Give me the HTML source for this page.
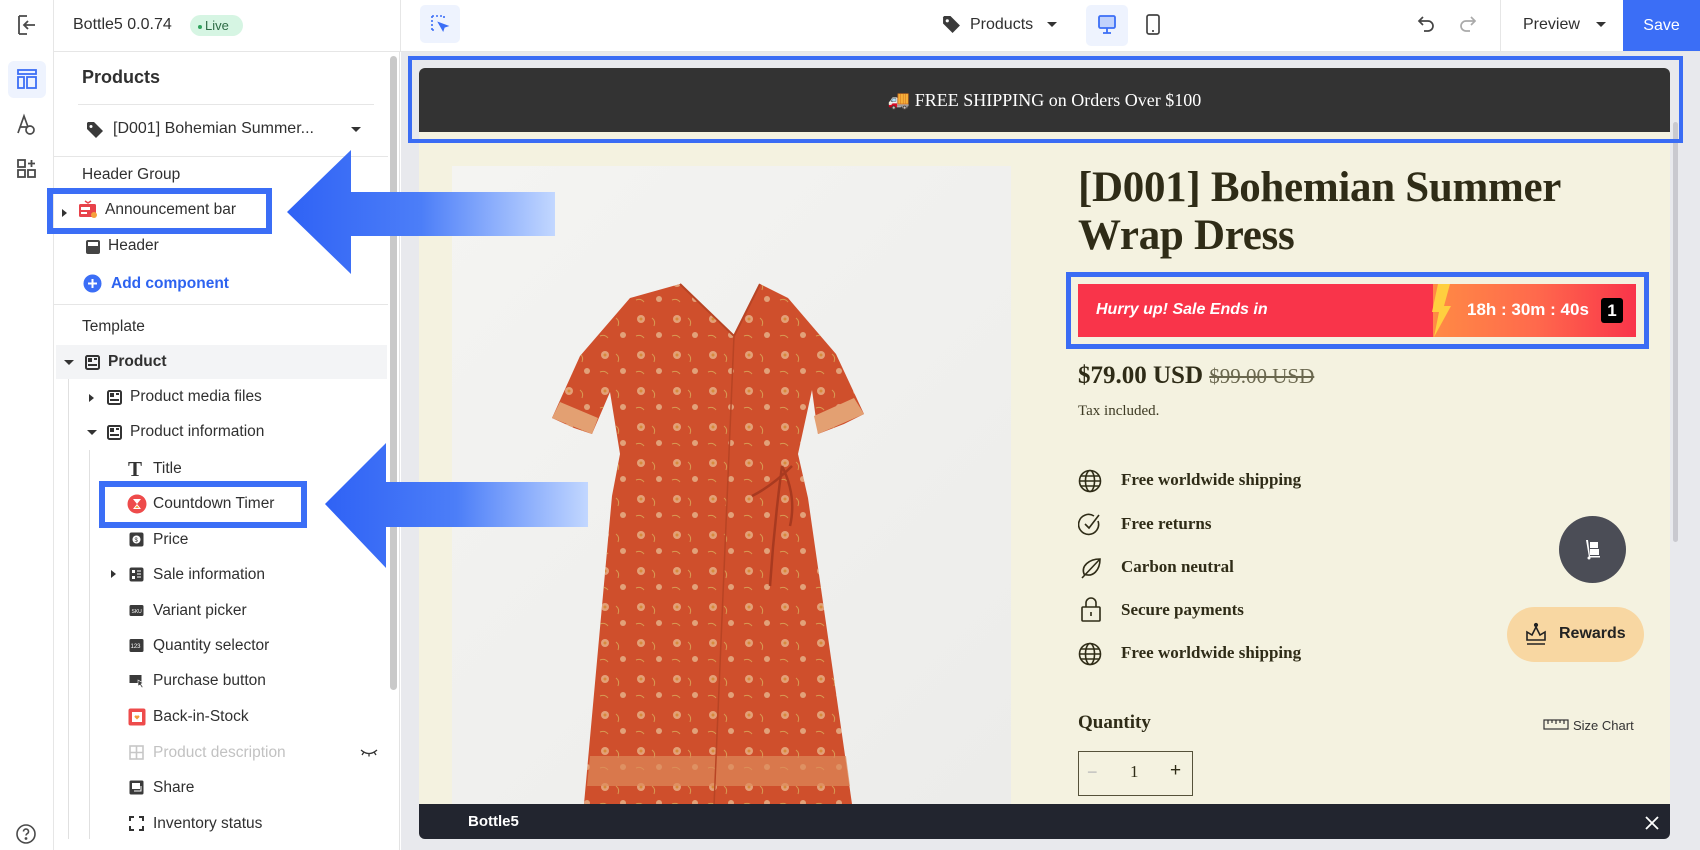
<!DOCTYPE html>
<html><head><meta charset="utf-8"><style>
*{margin:0;padding:0;box-sizing:border-box}
body{width:1700px;height:850px;overflow:hidden;background:#fff;font-family:"Liberation Sans",sans-serif;color:#303030;position:relative}
.a{position:absolute}
.sans{font-family:"Liberation Sans",sans-serif}
.serif{font-family:"Liberation Serif",serif}
.it{position:absolute;font-size:15.5px;color:#303030;white-space:nowrap;line-height:20px}
.ic{position:absolute;width:15px;height:15px}
.feat{position:absolute;left:1121px;font-family:"Liberation Serif",serif;font-weight:bold;font-size:17px;color:#2f2c17}
</style></head><body>

<!-- left rail -->
<div class="a" style="left:0;top:0;width:54px;height:850px;border-right:1px solid #e6e6e6;background:#fff"></div>
<svg class="a" style="left:16px;top:14px" width="22" height="22" viewBox="0 0 22 22" fill="none" stroke="#4a4a4a" stroke-width="1.8"><path d="M3 2v18M3 2h8M3 20h8M19 11H8M12 7l-4 4 4 4"/></svg>
<div class="a" style="left:8px;top:61px;width:38px;height:37px;background:#eef3fe;border-radius:6px"></div>
<svg class="a" style="left:16px;top:68px" width="22" height="22" viewBox="0 0 22 22" fill="none" stroke="#3d6ef5" stroke-width="1.8"><rect x="2" y="2" width="18" height="4"/><rect x="2" y="9" width="6" height="11"/><rect x="11" y="9" width="9" height="11"/></svg>
<svg class="a" style="left:15px;top:113px" width="24" height="24" viewBox="0 0 24 24" fill="none" stroke="#4a4a4a" stroke-width="1.7"><path d="M3 20L9 3l4 11M5 14h7"/><circle cx="15" cy="17" r="4"/></svg>
<svg class="a" style="left:16px;top:158px" width="22" height="22" viewBox="0 0 22 22" fill="none" stroke="#4a4a4a" stroke-width="1.8"><rect x="2" y="2" width="7" height="7"/><rect x="2" y="12" width="7" height="7"/><rect x="12" y="12" width="7" height="7"/><path d="M15.5 2v7M12 5.5h7"/></svg>
<svg class="a" style="left:15px;top:823px" width="22" height="22" viewBox="0 0 22 22" fill="none" stroke="#4a4a4a" stroke-width="1.6"><circle cx="11" cy="11" r="9"/><path d="M8.5 8.5a2.5 2.5 0 1 1 3.5 2.3c-.7.4-1 .9-1 1.7"/><circle cx="11" cy="15.5" r=".6" fill="#4a4a4a"/></svg>

<!-- top header left -->
<div class="a" style="left:54px;top:51px;width:347px;height:1px;background:#e6e6e6"></div>
<div class="a" style="left:73px;top:16px;font-size:16px;color:#303030">Bottle5 0.0.74</div>
<div class="a" style="left:190px;top:15px;width:53px;height:21px;border-radius:11px;background:#d6f5e3;font-size:13px;color:#2d6b45;padding-left:8px;line-height:21px"><span style="display:inline-block;width:4px;height:4px;border-radius:2px;background:#2fa35d;vertical-align:middle;margin-right:3px"></span>Live</div>
<div class="a" style="left:400px;top:0;width:1px;height:52px;background:#e6e6e6"></div>

<!-- sidebar panel -->
<div class="a" style="left:54px;top:52px;width:346px;height:798px;background:#fff;border-right:1px solid #e3e3e3"></div>
<div class="a" style="left:390px;top:56px;width:7px;height:634px;border-radius:4px;background:#c9c9c9"></div>
<div class="a" style="left:82px;top:67px;font-size:18px;font-weight:bold;color:#303030">Products</div>
<div class="a" style="left:78px;top:104px;width:296px;height:1px;background:#e6e6e6"></div>
<svg class="a" style="left:86px;top:121px" width="18" height="18" viewBox="0 0 18 18"><path d="M1 2v6l9 9 7-7-9-9H2z" fill="#3a3a3a"/><circle cx="5" cy="5.5" r="1.5" fill="#fff"/></svg>
<div class="it" style="left:113px;top:119px;font-size:16px">[D001] Bohemian Summer...</div>
<div class="a" style="left:351px;top:127px;border:5px solid transparent;border-top:5px solid #333;border-bottom:none"></div>
<div class="a" style="left:54px;top:156px;width:334px;height:1px;background:#e6e6e6"></div>
<div class="it" style="left:82px;top:165px;font-size:15.5px">Header Group</div>
<div class="a" style="left:62px;top:209px;border:4px solid transparent;border-left:5px solid #333;border-right:none"></div>
<svg class="a" style="left:78px;top:199px" width="20" height="20" viewBox="0 0 20 20"><path d="M7 2l3 2 3-2" stroke="#e8424a" fill="none" stroke-width="1.5"/><rect x="1" y="5" width="17" height="13" rx="1.5" fill="#e8424a"/><rect x="3" y="8" width="9" height="3" fill="#fff"/><rect x="3" y="13" width="6" height="2" fill="#fff"/><circle cx="16" cy="16" r="3" fill="#f6a03c"/></svg>
<div class="it" style="left:105px;top:200px;font-size:15.5px">Announcement bar</div>
<div class="a" style="left:47px;top:188px;width:225px;height:46px;border:6px solid #3b6ef6"></div>
<svg class="a" style="left:85px;top:239px" width="16" height="16" viewBox="0 0 16 16"><rect x="1" y="1" width="14" height="14" rx="2" fill="#444"/><rect x="3" y="3" width="10" height="4" fill="#fff"/></svg>
<div class="it" style="left:108px;top:236px">Header</div>
<svg class="a" style="left:83px;top:274px" width="19" height="19" viewBox="0 0 19 19"><circle cx="9.5" cy="9.5" r="9" fill="#3b6ef6"/><path d="M9.5 5v9M5 9.5h9" stroke="#fff" stroke-width="2"/></svg>
<div class="it" style="left:111px;top:274px;color:#2d63f0;font-weight:bold">Add component</div>
<div class="a" style="left:54px;top:304px;width:334px;height:1px;background:#e6e6e6"></div>
<div class="it" style="left:82px;top:317px">Template</div>
<div class="a" style="left:56px;top:345px;width:331px;height:34px;background:#f3f4f6"></div>
<div class="a" style="left:64px;top:360px;border:5px solid transparent;border-top:5px solid #333;border-bottom:none"></div>
<svg class="ic" style="left:85px;top:355px"><rect x="1" y="1" width="13" height="13" rx="1.5" fill="none" stroke="#333" stroke-width="2"/><rect x="3" y="3" width="4" height="4" fill="#333"/><path d="M9 4h3M3 10h9" stroke="#333" stroke-width="2"/></svg>
<div class="it" style="left:108px;top:352px;font-weight:bold">Product</div>
<div class="a" style="left:68px;top:379px;width:1px;height:460px;background:#e0e0e0"></div>
<div class="a" style="left:89px;top:450px;width:1px;height:389px;background:#e0e0e0"></div>
<div class="a" style="left:89px;top:394px;border:4px solid transparent;border-left:5px solid #333;border-right:none"></div>
<svg class="ic" style="left:107px;top:390px"><rect x="1" y="1" width="13" height="13" rx="1.5" fill="none" stroke="#333" stroke-width="2"/><rect x="3" y="3" width="4" height="4" fill="#333"/><path d="M9 4h3M3 10h9" stroke="#333" stroke-width="2"/></svg>
<div class="it" style="left:130px;top:387px">Product media files</div>
<div class="a" style="left:87px;top:430px;border:5px solid transparent;border-top:5px solid #333;border-bottom:none"></div>
<svg class="ic" style="left:107px;top:425px"><rect x="1" y="1" width="13" height="13" rx="1.5" fill="none" stroke="#333" stroke-width="2"/><rect x="3" y="3" width="4" height="4" fill="#333"/><path d="M9 4h3M3 10h9" stroke="#333" stroke-width="2"/></svg>
<div class="it" style="left:130px;top:422px">Product information</div>

<div class="a serif" style="left:128px;top:457px;font-size:21px;font-weight:bold;color:#333">T</div>
<div class="it" style="left:153px;top:459px">Title</div>
<svg class="a" style="left:127px;top:494px" width="20" height="20" viewBox="0 0 20 20"><circle cx="10" cy="10" r="9.5" fill="#ee4b4b"/><path d="M6 5h8l-4 5 4 5H6l4-5z" fill="#fff"/><path d="M8 14h4l-2-2.5z" fill="#f6a03c"/></svg>
<div class="it" style="left:153px;top:494px">Countdown Timer</div>
<div class="a" style="left:99px;top:481px;width:208px;height:47px;border:6px solid #3b6ef6"></div>
<svg class="ic" style="left:129px;top:532px"><rect x="0.5" y="0.5" width="14" height="14" rx="2" fill="#3a3a3a"/><circle cx="7.5" cy="7.5" r="4" fill="#fff"/><text x="5.5" y="10" font-size="6" fill="#333" font-family="Liberation Sans">$</text></svg>
<div class="it" style="left:153px;top:530px">Price</div>
<div class="a" style="left:111px;top:570px;border:4px solid transparent;border-left:5px solid #333;border-right:none"></div>
<svg class="ic" style="left:129px;top:567px"><rect x="0.5" y="0.5" width="14" height="14" rx="2" fill="#3a3a3a"/><rect x="3" y="3" width="3" height="3" fill="#fff"/><rect x="3" y="9" width="3" height="3" fill="#fff"/><path d="M8 4h4M8 7h4M8 10h4" stroke="#fff"/></svg>
<div class="it" style="left:153px;top:565px">Sale information</div>
<svg class="ic" style="left:129px;top:603px"><rect x="0.5" y="2" width="14" height="11" rx="1.5" fill="#3a3a3a"/><text x="2.5" y="10" font-size="5" fill="#fff" font-family="Liberation Sans">SKU</text></svg>
<div class="it" style="left:153px;top:601px">Variant picker</div>
<svg class="ic" style="left:129px;top:638px"><rect x="0.5" y="1" width="14" height="13" rx="1.5" fill="#3a3a3a"/><text x="1.5" y="10" font-size="6" fill="#fff" font-family="Liberation Sans">123</text></svg>
<div class="it" style="left:153px;top:636px">Quantity selector</div>
<svg class="ic" style="left:129px;top:673px"><rect x="0.5" y="2" width="12" height="8" fill="#3a3a3a"/><path d="M9 7l5 3-2 1 2 3-1 1-2-3-2 1z" fill="#3a3a3a" stroke="#fff" stroke-width=".6"/></svg>
<div class="it" style="left:153px;top:671px">Purchase button</div>
<svg class="a" style="left:128px;top:708px" width="18" height="18" viewBox="0 0 18 18"><rect x="0.5" y="0.5" width="17" height="17" rx="2" fill="#ee4b4b"/><rect x="4" y="4" width="10" height="10" fill="#fff"/><path d="M9 11.5l-2.5-2.5a1.4 1.4 0 0 1 2.5-1 1.4 1.4 0 0 1 2.5 1z" fill="#f39b3a"/></svg>
<div class="it" style="left:153px;top:707px">Back-in-Stock</div>
<svg class="ic" style="left:129px;top:745px"><rect x="1" y="1" width="13" height="13" fill="none" stroke="#c7c7c7" stroke-width="1.6"/><path d="M7.5 1v13M1 7.5h13" stroke="#c7c7c7" stroke-width="1.6"/></svg>
<div class="it" style="left:153px;top:743px;color:#c2c2c2">Product description</div>
<svg class="a" style="left:360px;top:748px" width="18" height="10" viewBox="0 0 18 10" fill="none" stroke="#333" stroke-width="1.3"><path d="M1 2q8 7 16 0M4 4l-2 3M9 5.5v3M14 4l2 3"/></svg>
<svg class="ic" style="left:129px;top:780px"><rect x="0.5" y="0.5" width="14" height="14" rx="1.5" fill="#3a3a3a"/><rect x="3" y="3" width="8" height="6" fill="#fff"/><path d="M5 11h7V6" stroke="#fff" fill="none"/></svg>
<div class="it" style="left:153px;top:778px">Share</div>
<svg class="ic" style="left:129px;top:816px" fill="none" stroke="#333" stroke-width="2"><path d="M1 5V1h4M10 1h4v4M14 10v4h-4M5 14H1v-4"/></svg>
<div class="it" style="left:153px;top:814px">Inventory status</div>

<!-- canvas top bar -->
<div class="a" style="left:401px;top:0;width:1299px;height:52px;background:#fff;border-bottom:1px solid #e6e6e6"></div>
<div class="a" style="left:420px;top:5px;width:40px;height:38px;border-radius:5px;background:#eef3fe"></div>
<svg class="a" style="left:430px;top:14px" width="20" height="20" viewBox="0 0 20 20" fill="none" stroke="#3b6ef6" stroke-width="1.6"><path d="M2 2h12M2 2v14M2 16h4M14 2v4" stroke-dasharray="2 2"/><path d="M9 9l8 3-3 1-1 3z" fill="#3b6ef6"/></svg>
<svg class="a" style="left:942px;top:15px" width="19" height="19" viewBox="0 0 18 18"><path d="M1 2v6l9 9 7-7-9-9H2z" fill="#3a3a3a"/><circle cx="5" cy="5.5" r="1.5" fill="#fff"/></svg>
<div class="a" style="left:970px;top:16px;font-size:16px;color:#303030">Products</div>
<div class="a" style="left:1047px;top:22px;border:5px solid transparent;border-top:5px solid #333;border-bottom:none"></div>
<div class="a" style="left:1086px;top:5px;width:42px;height:41px;border-radius:5px;background:#eef3fe"></div>
<svg class="a" style="left:1096px;top:14px" width="22" height="22" viewBox="0 0 22 22" fill="none" stroke="#3b6ef6" stroke-width="1.8"><rect x="3" y="2" width="16" height="12" rx="1.5" fill="#3b6ef6" fill-opacity=".25"/><path d="M11 14v5M7 19h8"/></svg>
<svg class="a" style="left:1144px;top:13px" width="18" height="24" viewBox="0 0 18 24" fill="none" stroke="#444" stroke-width="1.7"><rect x="3" y="2" width="12" height="19" rx="2"/><path d="M8 18h2"/></svg>
<svg class="a" style="left:1417px;top:14px" width="20" height="22" viewBox="0 0 20 22" fill="none" stroke="#444" stroke-width="1.7"><path d="M6 3L2 7l4 4M2 7h9a5 5 0 0 1 0 10H7"/></svg>
<svg class="a" style="left:1457px;top:14px" width="20" height="22" viewBox="0 0 20 22" fill="none" stroke="#aaa" stroke-width="1.7"><path d="M14 3l4 4-4 4M18 7H9a5 5 0 0 0 0 10h4"/></svg>
<div class="a" style="left:1500px;top:0;width:1px;height:52px;background:#e6e6e6"></div>
<div class="a" style="left:1523px;top:16px;font-size:16px;color:#303030">Preview</div>
<div class="a" style="left:1596px;top:22px;border:5px solid transparent;border-top:5px solid #333;border-bottom:none"></div>
<div class="a" style="left:1623px;top:0;width:77px;height:51px;background:#3b6ef6;color:#fff;font-size:16px;text-align:center;line-height:51px">Save</div>

<!-- canvas -->
<div class="a" style="left:401px;top:52px;width:1299px;height:798px;background:#e8e9ed"></div>
<div class="a" style="left:419px;top:68px;width:1251px;height:771px;background:#f4f2e0;border-radius:6px;overflow:hidden">
  <div class="a" style="left:0;top:0;width:1251px;height:64px;background:#333333;color:#fff;font-family:'Liberation Serif',serif;font-size:18px;text-align:center;line-height:64px">🚚 FREE SHIPPING on Orders Over $100</div>
  <div class="a" style="left:0;top:736px;width:1251px;height:35px;background:#22252f"></div>
  <div class="a" style="left:49px;top:745px;color:#fff;font-weight:bold;font-size:15px">Bottle5</div>
  <svg class="a" style="left:1225px;top:747px" width="16" height="16" viewBox="0 0 16 16" stroke="#fff" stroke-width="1.8"><path d="M2 2l12 12M14 2L2 14"/></svg>
</div>
<div class="a" style="left:1673px;top:122px;width:5px;height:420px;border-radius:3px;background:#c9c9cf"></div>
<div class="a" style="left:408px;top:56px;width:1275px;height:87px;border:4px solid #3a6cf4"></div>

<!-- product image -->
<div class="a" style="left:452px;top:166px;width:559px;height:638px;background:linear-gradient(135deg,#f4f4f2,#ececea)"></div>
<svg class="a" style="left:452px;top:166px" width="559" height="638" viewBox="0 0 559 638">
<defs><pattern id="fl" width="36" height="36" patternUnits="userSpaceOnUse"><circle cx="9" cy="9" r="4" fill="#e9b48a" opacity=".8"/><circle cx="9" cy="9" r="1.5" fill="#d78a3a"/><circle cx="27" cy="25" r="3" fill="#eac39a" opacity=".7"/><path d="M20 8q4 3 2 8M4 26q5-2 8 2" stroke="#d79a52" fill="none" stroke-width="1"/></pattern></defs>
<path d="M228 118 L178 132 L128 190 L100 252 L122 262 L140 268 L158 226 L168 288 L160 330 L132 638 L400 638 L356 332 L346 288 L360 224 L366 268 L392 258 L412 248 L384 188 L336 132 L308 118 L282 170 Z" fill="#cf4f2c"/>
<path d="M228 118 L178 132 L128 190 L100 252 L122 262 L140 268 L158 226 L168 288 L160 330 L132 638 L400 638 L356 332 L346 288 L360 224 L366 268 L392 258 L412 248 L384 188 L336 132 L308 118 L282 170 Z" fill="url(#fl)"/>
<path d="M100 252 L140 268 L146 252 L108 236 Z M412 248 L366 268 L362 250 L402 232 Z" fill="#e3a072"/>
<path d="M138 590 L394 590 L398 620 L135 620 Z" fill="#dd8a5a" opacity=".7"/>
<path d="M228 118 L282 170 L308 118" fill="none" stroke="#b84424" stroke-width="2"/>
<path d="M300 330 Q320 320 340 300 M330 300 Q345 330 338 360 M330 300 Q322 360 318 420" stroke="#a83a20" stroke-width="2.5" fill="none"/>
<path d="M282 170 L262 640" stroke="#b84424" stroke-width="1.5"/>
</svg>

<!-- title -->
<div class="a serif" style="left:1078px;top:164px;width:580px;font-size:43px;line-height:48px;font-weight:bold;color:#2f2c17;letter-spacing:-0.3px">[D001] Bohemian Summer Wrap Dress</div>

<!-- countdown -->
<div class="a" style="left:1066px;top:272px;width:583px;height:77px;border:5px solid #3a6cf4"></div>
<div class="a" style="left:1078px;top:284px;width:558px;height:53px;background:#f9344a;overflow:hidden">
  <div class="a" style="left:355px;top:0;width:203px;height:53px;background:linear-gradient(90deg,#ff8a45,#ff6a4c 50%,#f9344a)"></div>
  <svg class="a" style="left:350px;top:0" width="24" height="53" viewBox="0 0 24 53"><path d="M10 0h12l-6 22h7L6 53l5-25H4z" fill="#ffcf3f"/></svg>
  <div class="a" style="left:18px;top:17px;color:#fff;font-weight:bold;font-style:italic;font-size:16px">Hurry up! Sale Ends in</div>
  <div class="a" style="left:389px;top:16px;color:#fff;font-weight:bold;font-size:17px;white-space:nowrap">18h : 30m : 40s</div>
  <div class="a" style="left:523px;top:14px;width:22px;height:25px;background:#000;border-radius:3px;color:#fff;font-weight:bold;font-size:17px;text-align:center;line-height:25px">1</div>
</div>

<!-- price -->
<div class="a serif" style="left:1078px;top:362px;font-size:25px;font-weight:bold;color:#2f2c17;white-space:nowrap">$79.00 USD <span style="font-weight:normal;font-size:21px;color:#6a674e;text-decoration:line-through">$99.00 USD</span></div>
<div class="a serif" style="left:1078px;top:403px;font-size:15px;color:#3e3b24">Tax included.</div>

<!-- features -->
<svg class="a" style="left:1078px;top:469px" width="24" height="24" viewBox="0 0 24 24" fill="none" stroke="#2f2c17" stroke-width="1.6"><circle cx="12" cy="12" r="10.5"/><ellipse cx="12" cy="12" rx="4.5" ry="10.5"/><path d="M1.5 12h21M3 7h18M3 17h18"/></svg>
<div class="feat" style="top:470px">Free worldwide shipping</div>
<svg class="a" style="left:1078px;top:512px" width="24" height="26" viewBox="0 0 24 26" fill="none" stroke="#2f2c17" stroke-width="1.6"><path d="M20 9a10 10 0 1 1-4-5"/><path d="M7 12l4 4 10-13"/></svg>
<div class="feat" style="top:514px">Free returns</div>
<svg class="a" style="left:1079px;top:556px" width="24" height="24" viewBox="0 0 24 24" fill="none" stroke="#2f2c17" stroke-width="1.6"><path d="M3 22L21 3M5 18C2 10 10 3 21 3c0 11-7 19-16 15z"/></svg>
<div class="feat" style="top:557px">Carbon neutral</div>
<svg class="a" style="left:1080px;top:597px" width="22" height="26" viewBox="0 0 22 26" fill="none" stroke="#2f2c17" stroke-width="1.6"><rect x="2" y="10" width="18" height="14" rx="1"/><path d="M6 10V6a5 5 0 0 1 10 0v4M11 15v4"/></svg>
<div class="feat" style="top:600px">Secure payments</div>
<svg class="a" style="left:1078px;top:642px" width="24" height="24" viewBox="0 0 24 24" fill="none" stroke="#2f2c17" stroke-width="1.6"><circle cx="12" cy="12" r="10.5"/><ellipse cx="12" cy="12" rx="4.5" ry="10.5"/><path d="M1.5 12h21M3 7h18M3 17h18"/></svg>
<div class="feat" style="top:643px">Free worldwide shipping</div>

<!-- floating -->
<div class="a" style="left:1559px;top:516px;width:67px;height:67px;border-radius:50%;background:#4b4d56"></div>
<svg class="a" style="left:1582px;top:538px" width="22" height="22" viewBox="0 0 22 22" fill="#fff"><rect x="8" y="4" width="8" height="6"/><rect x="8" y="11" width="9" height="6"/><path d="M4 2h2l2 16h10v1.5H7z"/><circle cx="7" cy="20" r="1.5"/></svg>
<div class="a" style="left:1507px;top:607px;width:137px;height:55px;border-radius:28px;background:#f8d7a2"></div>
<svg class="a" style="left:1525px;top:622px" width="22" height="24" viewBox="0 0 22 24" fill="none" stroke="#222" stroke-width="1.6"><path d="M2 18V10l5 3 4-8 4 8 5-3v8zM2 22h18"/><circle cx="11" cy="3" r="1.3" fill="#222"/></svg>
<div class="a" style="left:1559px;top:625px;font-weight:bold;font-size:16px;color:#222">Rewards</div>

<!-- quantity -->
<div class="a serif" style="left:1078px;top:712px;font-size:19px;font-weight:bold;color:#2f2c17">Quantity</div>
<svg class="a" style="left:1543px;top:719px" width="26" height="11" viewBox="0 0 26 11" fill="none" stroke="#333" stroke-width="1.2"><rect x="1" y="1" width="24" height="9"/><path d="M5 1v4M9 1v3M13 1v4M17 1v3M21 1v4"/></svg>
<div class="a" style="left:1573px;top:718px;font-size:13px;color:#333">Size Chart</div>
<div class="a" style="left:1078px;top:751px;width:115px;height:45px;border:1.5px solid #55523a"></div>
<div class="a" style="left:1087px;top:762px;font-size:18px;color:#bbb">−</div>
<div class="a serif" style="left:1130px;top:762px;font-size:17px;color:#2f2c17">1</div>
<div class="a" style="left:1170px;top:760px;font-size:19px;color:#2f2c17">+</div>

<!-- arrows -->
<svg class="a" style="left:0;top:0" width="1700" height="850">
<defs>
<linearGradient id="g1" x1="287" y1="0" x2="555" y2="0" gradientUnits="userSpaceOnUse"><stop offset="0" stop-color="#2f62f5"/><stop offset=".5" stop-color="#4c7ef8"/><stop offset="1" stop-color="#c2d7ff"/></linearGradient>
<linearGradient id="g2" x1="325" y1="0" x2="588" y2="0" gradientUnits="userSpaceOnUse"><stop offset="0" stop-color="#2f62f5"/><stop offset=".5" stop-color="#4c7ef8"/><stop offset="1" stop-color="#c2d7ff"/></linearGradient>
</defs>
<path d="M287 212 L351 150 L351 192 L555 192 L555 236 L351 236 L351 274 Z" fill="url(#g1)"/>
<path d="M325 504 L386 443 L386 482 L588 482 L588 527 L386 527 L386 568 Z" fill="url(#g2)"/>
</svg>
</body></html>
